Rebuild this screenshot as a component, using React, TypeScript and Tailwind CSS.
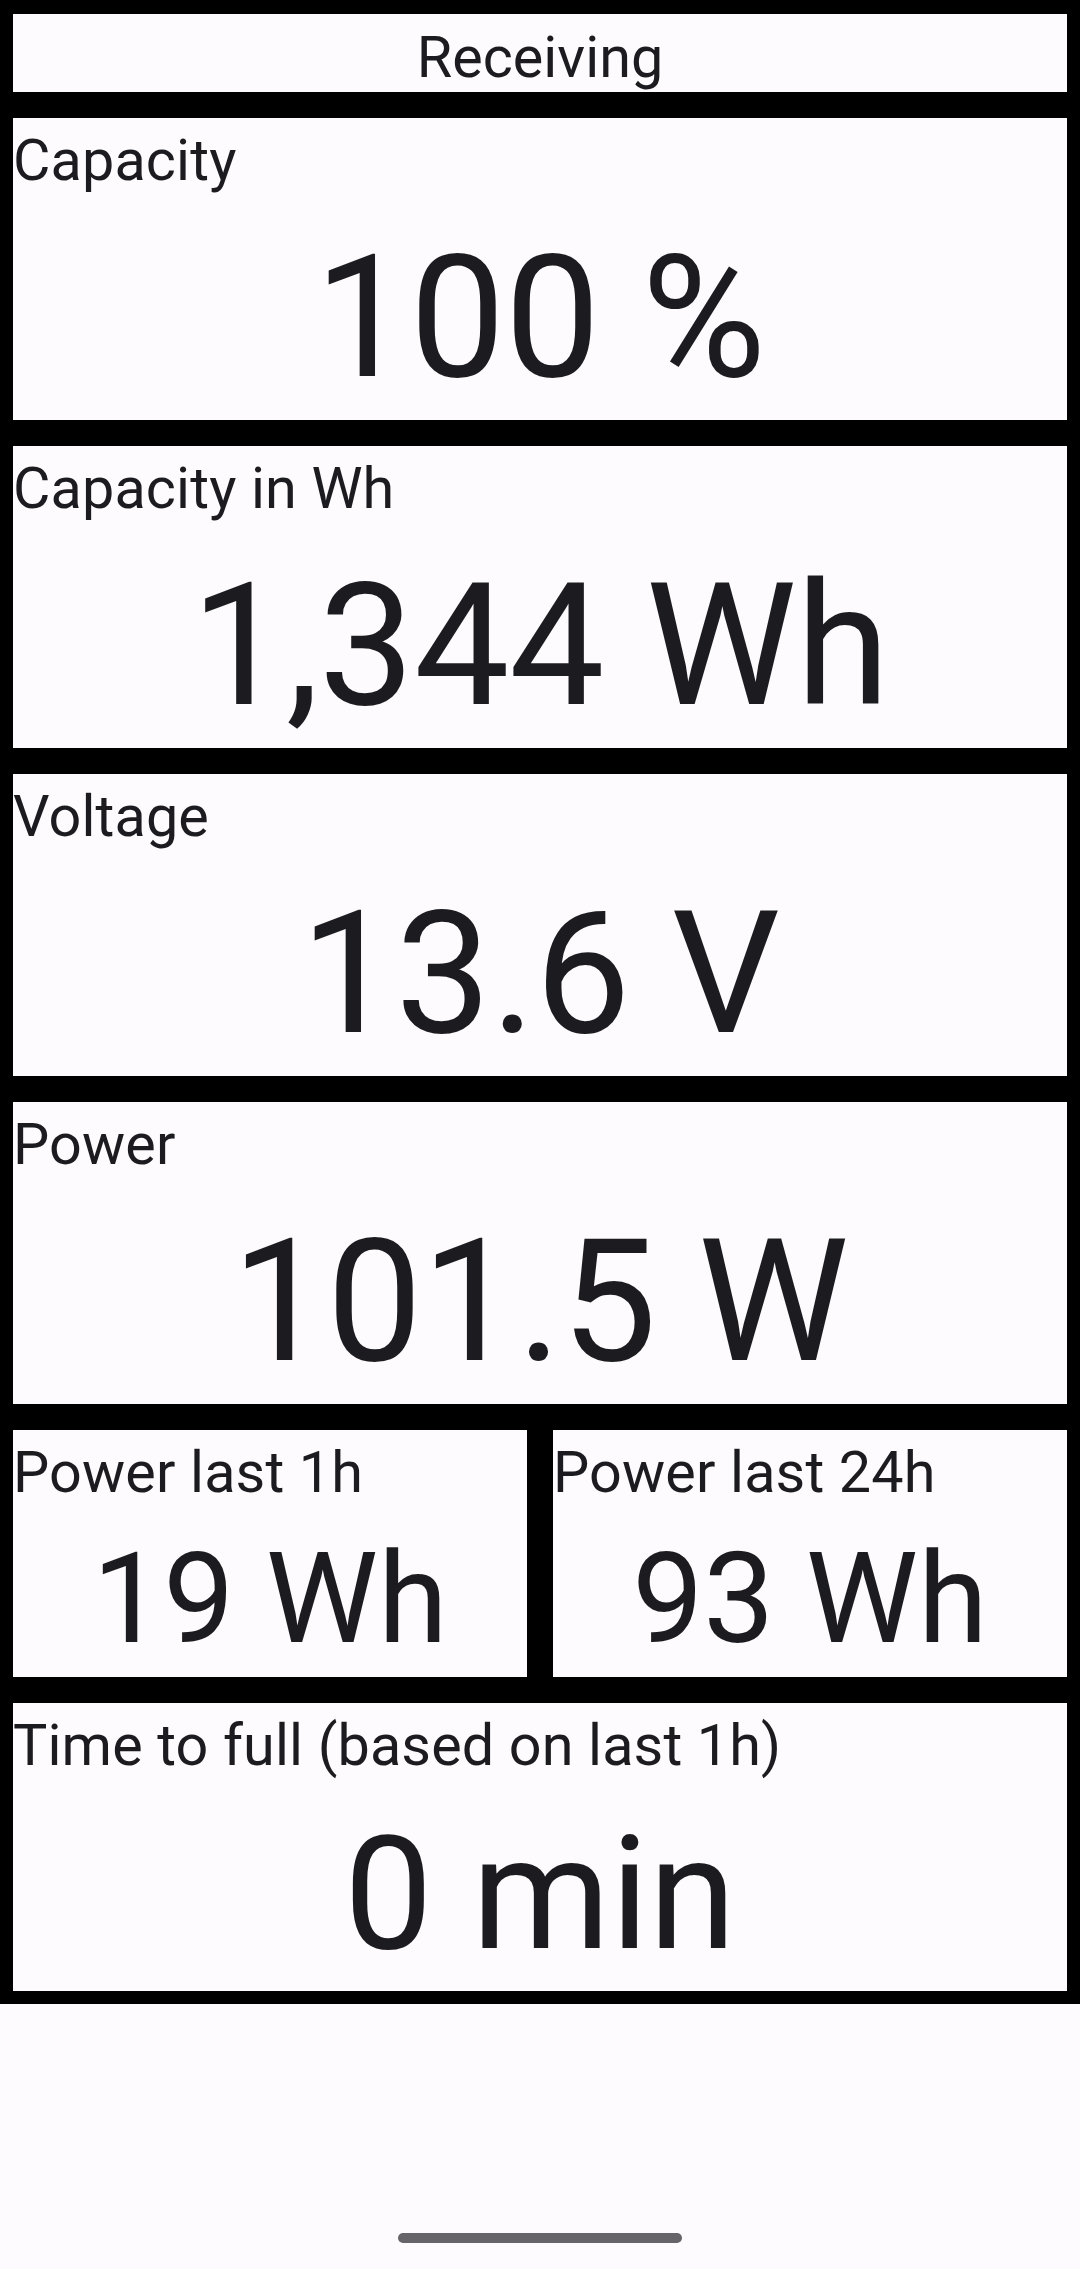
import type { FC } from "react";

type Stat = { label: string; value: string };

const bigStats: Stat[] = [
  { label: "Capacity", value: "100 %" },
  { label: "Capacity in Wh", value: "1,344 Wh" },
  { label: "Voltage", value: "13.6 V" },
  { label: "Power", value: "101.5 W" },
];

const Label: FC<{ text: string }> = ({ text }) => (
  <div className="whitespace-nowrap text-[57.5px] leading-[67px] tracking-[0.15px]">{text}</div>
);

const BigCell: FC<Stat> = ({ label, value }) => (
  <div className="h-[302px] bg-[#fdfbfe] pt-[9px]">
    <Label text={label} />
    <div className="mt-[24px] whitespace-nowrap text-center text-[170px] leading-[200px] tracking-[-0.5px]">
      {value}
    </div>
  </div>
);

const SmallCell: FC<Stat> = ({ label, value }) => (
  <div className="h-[247px] bg-[#fdfbfe] pt-[9px]">
    <Label text={label} />
    <div className="mt-[18px] whitespace-nowrap text-center text-[126.5px] leading-[150px]">
      {value}
    </div>
  </div>
);

export default function App() {
  return (
    <div className="flex min-h-[2269px] flex-col bg-[#fdfbfe] font-['Roboto',sans-serif] text-[#1c1b1f]">
      <div className="flex flex-col gap-[26px] bg-black px-[13px] pb-[13px] pt-[14px]">
        <div className="h-[78px] bg-[#fdfbfe] pt-[10px] text-center text-[57.5px] leading-[67px]">
          Receiving
        </div>

        {bigStats.map((s) => (
          <BigCell key={s.label} {...s} />
        ))}

        <div className="grid grid-cols-2 gap-[26px]">
          <SmallCell label="Power last 1h" value="19 Wh" />
          <SmallCell label="Power last 24h" value="93 Wh" />
        </div>

        <div className="h-[288px] bg-[#fdfbfe] pt-[9px]">
          <Label text="Time to full (based on last 1h)" />
          <div className="mt-[25px] whitespace-nowrap text-center text-[158px] leading-[180px]">
            0 min
          </div>
        </div>
      </div>

      <div className="flex flex-1 items-end justify-center pb-[26px]">
        <div className="h-[10px] w-[284px] rounded-full bg-[#666468]" />
      </div>
    </div>
  );
}
